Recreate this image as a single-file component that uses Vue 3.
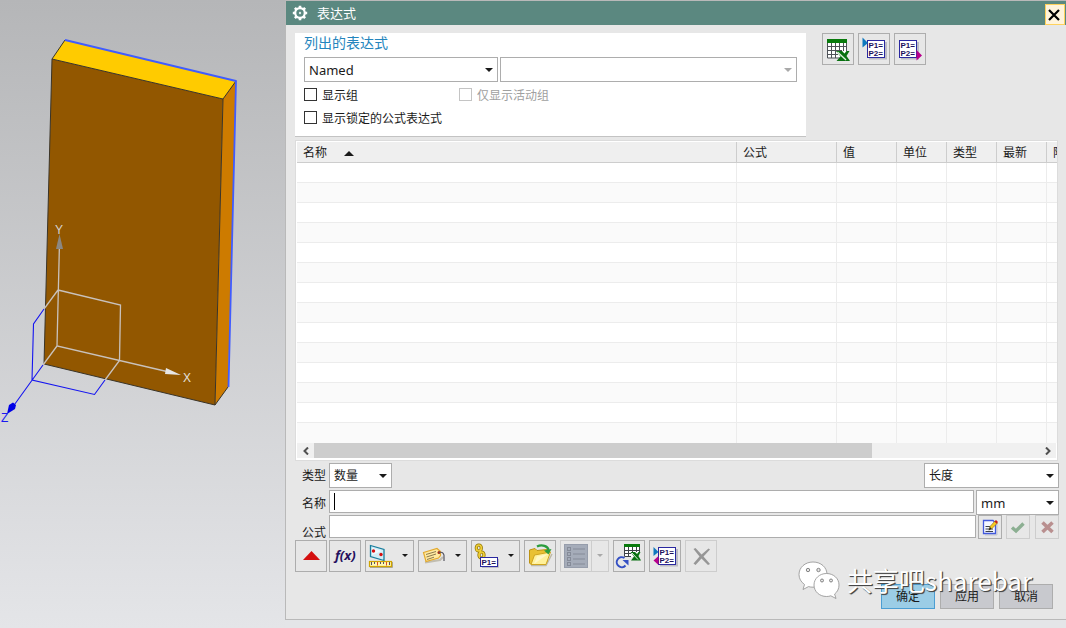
<script setup>
import { ref } from 'vue'

const filter = ref('Named')
const filterText = ref('')
const showGroups = ref(false)
const activeOnly = ref(false)
const showLocked = ref(false)
const kind = ref('数量')
const dimension = ref('长度')
const unit = ref('mm')
const name = ref('')
const formula = ref('')
const columns = [
  { title: '公式', cls: 'c-formula' },
  { title: '值', cls: 'c-value' },
  { title: '单位', cls: 'c-small' },
  { title: '类型', cls: 'c-small' },
  { title: '最新', cls: 'c-small' },
  { title: '附注', cls: 'c-small' },
]
</script>

<template>
  <div class="app">
    <div class="viewport">
      <svg class="scene" viewBox="0 0 285 628" width="285" height="628" role="img" aria-label="XYZ">
        <g stroke-linejoin="round">
          <polygon points="52,59 223,99 215,405 44,364" fill="#925700" />
          <polygon points="52,59 65,40 236,81 223,99" fill="#ffcb00" />
          <polygon points="223,99 236,81 228,387 215,405" fill="#cd7b00" />
          <path d="M65,40 52,59 223,99 236,81M52,59 44,364 215,405 228,387M223,99 215,405" fill="none" stroke="#3a3428" />
          <path d="M65,40 236,81 228.500,387" fill="none" stroke="#405cff" stroke-width="1.800" />
        </g>
        <g fill="none" stroke="#c9c2bc" stroke-width="1.300">
          <path d="M59.500,242 57,346 169,372M58,290 120.500,305 119.500,360.500 105,380M58,290 44,309M57,346 43,365" />
        </g>
        <path d="M44,309 33.500,324 32,380 94.500,394.500 105,380M43,365 12,408" fill="none" stroke="#1414f0" stroke-width="1.100" />
        <polygon points="59.500,234 63,249 56,249" fill="#8b8781" />
        <polygon points="181,375 166,368 165,374" fill="#e6e6e6" />
        <polygon points="7,414 9,405 13,402.500 16,405 15,409" fill="#0000e6" />
        <g class="axis">
          <text x="55" y="234" fill="#d6d2cf">Y</text>
          <text x="183" y="382" fill="#e4e0dc">X</text>
          <text x="1" y="422" fill="#1a1af0">Z</text>
        </g>
      </svg>
    </div>

    <section class="dialog">
      <header class="titlebar">
        <svg width="16" height="16" viewBox="0 0 16 16" aria-hidden="true">
          <g stroke="#fff" fill="none">
            <circle cx="8" cy="8" r="4.800" stroke-width="2.200" />
            <path d="M8,0.800V3M8,13v2.200M0.800,8H3M13,8h2.200M2.900,2.900l1.600,1.600M11.500,11.500l1.600,1.600M2.900,13.100l1.600,-1.600M11.500,4.500l1.600,-1.600" stroke-width="2.600" />
          </g>
          <circle cx="8" cy="8" r="1.200" fill="#dcebe7" />
        </svg>
        <h1>表达式</h1>
        <button class="close" aria-label="关闭">
          <svg width="12" height="12" viewBox="0 0 12 12"><path d="M1,1 11,11M11,1 1,11" stroke="#000" stroke-width="2.200" /></svg>
        </button>
      </header>

      <div class="content">
        <div class="top">
          <div class="panel">
            <h2>列出的表达式</h2>
            <div class="filters">
              <span class="drop named"><select v-model="filter" aria-label="筛选"><option>Named</option></select></span>
              <span class="drop off"><select v-model="filterText" aria-label="筛选文本" disabled><option value=""></option></select></span>
            </div>
            <div class="checks">
              <label><input v-model="showGroups" type="checkbox">显示组</label>
              <label class="disabled"><input v-model="activeOnly" type="checkbox" disabled>仅显示活动组</label>
              <label><input v-model="showLocked" type="checkbox">显示锁定的公式表达式</label>
            </div>
          </div>
          <div class="side">
            <button class="tool" aria-label="电子表格编辑">
              <svg viewBox="1 1 30 30">
                <rect x="5.500" y="6.500" width="19" height="18" fill="#fff" />
                <path d="M5.500,10V25H18M9.500,10V25M13.500,10V25M17.500,10V20M21.500,10V18M24.500,10V18M5.500,13.500H24M5.500,17.500H20M5.500,21.500H16" fill="none" stroke="#4e5258" />
                <rect x="5" y="6" width="20" height="4" fill="#087a0c" />
                <path d="M14,18h6l2.500,2.500 2,-2.500h3l-3,5 3.500,5H14.500l4,-4.500Z" fill="#087010" />
                <path d="M15.500,19l8.500,8" stroke="#dff0df" stroke-width="1.300" />
              </svg>
            </button>
            <button class="tool" aria-label="导入">
              <svg viewBox="1 1 30 30">
                <path d="M11,25.500H28V9" fill="none" stroke="#bcbcc4" stroke-width="2" />
                <rect x="9.500" y="7.500" width="17" height="17" fill="#fff" stroke="#2a28a0" />
                <text x="10.500" y="15">P1=</text><text x="10.500" y="23">P2=</text>
                <path d="M4.500,4.500 10,10 4.500,14.500Z" fill="#1078be" />
              </svg>
            </button>
            <button class="tool" aria-label="导出">
              <svg viewBox="1 1 30 30">
                <path d="M7,25.500H24V9" fill="none" stroke="#bcbcc4" stroke-width="2" />
                <rect x="5.500" y="7.500" width="17" height="17" fill="#fff" stroke="#2a28a0" />
                <text x="6.500" y="15">P1=</text><text x="6.500" y="23">P2=</text>
                <path d="M22.500,17 28,22.500 22.500,27.500Z" fill="#b8008c" />
              </svg>
            </button>
          </div>
        </div>

        <div class="grid">
          <div class="clip">
            <table>
              <thead>
                <tr>
                  <th>名称<i class="sort"></i></th>
                  <th v-for="c in columns" :key="c.title" :class="c.cls">{{ c.title }}</th>
                </tr>
              </thead>
              <tbody>
                <tr v-for="r in 14" :key="r"><td v-for="c in 7" :key="c"></td></tr>
              </tbody>
            </table>
          </div>
          <div class="scroll">
            <button aria-label="向左滚动"><svg width="6" height="8" viewBox="0 0 6 8"><path d="M5,0.500 1.500,4 5,7.500" /></svg></button>
            <div class="track"><div class="thumb"></div></div>
            <button aria-label="向右滚动"><svg width="6" height="8" viewBox="0 0 6 8"><path d="M1,0.500 4.500,4 1,7.500" /></svg></button>
          </div>
        </div>

        <div class="row">
          <label for="kind">类型</label>
          <span class="drop kind"><select id="kind" v-model="kind"><option>数量</option></select></span>
          <span class="drop dimension"><select v-model="dimension" aria-label="量纲"><option>长度</option></select></span>
        </div>
        <div class="row name-row">
          <label for="name">名称</label>
          <span class="field"><input id="name" v-model="name" type="text"><i class="caret"></i></span>
          <span class="drop unit"><select v-model="unit" aria-label="单位"><option>mm</option></select></span>
        </div>
        <div class="row formula-row">
          <label for="formula">公式</label>
          <span class="field"><input id="formula" v-model="formula" type="text"></span>
          <div class="minis">
            <button class="mini" aria-label="编辑">
              <svg viewBox="1 1 22 22">
                <path d="M7,20H19V9" fill="none" stroke="#c3c5cf" />
                <path d="M5.500,5.500H15L17.500,8V18.500H5.500Z" fill="#f4f7ff" stroke="#4259dc" stroke-width="1.300" />
                <path d="M7.500,11.500H13M7.500,14H15M7.500,16.500H15" stroke="#3b414a" />
                <path d="M11,15 12,11.500 17,6 19.500,8 14,13.500Z" fill="#f5c922" stroke="#8a6a10" stroke-width="0.600" />
                <path d="M16.500,6.500 18,5l2,2 -1.500,1.700Z" fill="#c52018" />
                <path d="M10.500,15.500 12,12 13.500,13.800Z" fill="#222" />
              </svg>
            </button>
            <button class="mini off" disabled aria-label="接受">
              <svg viewBox="1 1 22 22"><path d="M6,12.500 10,16 17.500,8.500" fill="none" stroke="#8caf92" stroke-width="3.400" /></svg>
            </button>
            <button class="mini off last" disabled aria-label="拒绝">
              <svg viewBox="1 1 22 22"><path d="M7.500,7.500 17.500,17M17.500,7.500 7.500,17" fill="none" stroke="#b98f8f" stroke-width="3.600" /></svg>
            </button>
          </div>
        </div>

        <div class="toolbar">
          <button class="tool first" aria-label="折叠">
            <svg viewBox="1 1 30 30"><path d="M8,20 16.500,11 25,20Z" fill="#d40f0f" /></svg>
          </button>
          <button class="tool" aria-label="函数">
            <svg viewBox="1 1 30 30"><text class="fx" x="6" y="20">f(x)</text></svg>
          </button>
          <button class="tool split" aria-label="测量">
            <svg viewBox="1 1 30 30">
              <path d="M5.500,5.500 19,9.500V20.500L5.500,16.500Z" fill="#d3edf6" stroke="#187d9d" stroke-width="1.300" />
              <path d="M7,8 17,11 7,15Z" fill="#effaff" />
              <circle cx="8.500" cy="11" r="1.700" fill="#d61010" /><circle cx="16" cy="14.500" r="1.700" fill="#d61010" />
              <path d="M5,27.500H27.500V22" fill="none" stroke="#aaa799" />
              <rect x="4.500" y="21.500" width="22" height="5" fill="#fff7ad" stroke="#d0a500" stroke-width="1.200" />
              <path d="M6.500,22v3M9.500,22v2M15.500,22v2M18.500,22v2M24.500,22v3" stroke="#55506b" /><path d="M12.500,22v3.500M21.500,22v3.500" stroke="#e04a20" />
            </svg><i class="arrow"></i>
          </button>
          <button class="tool split" aria-label="注释">
            <svg viewBox="1 1 30 30">
              <path d="M7,22.500 22,20 25,17" fill="none" stroke="#c1bdb0" stroke-width="2" />
              <path d="M5.500,12.500 19,8.500 22.500,11.500V15.500L20.500,18 8,21.500Z" fill="#ffe9a0" stroke="#e2a92c" stroke-width="1.200" />
              <path d="M8,14.500 18,11.500M8.500,17 18,14M9,19.500 16,17.200" stroke="#8d7b4e" />
              <circle cx="21" cy="12.500" r="1.500" fill="#a62c1d" />
              <path d="M21,12.500C25,11.500 26.500,14 26,17.500V21" fill="none" stroke="#565661" stroke-width="1.200" />
            </svg><i class="arrow"></i>
          </button>
          <button class="tool split" aria-label="引用">
            <svg viewBox="1 1 30 30">
              <g fill="none"><g stroke="#8f7400" stroke-width="3.200"><ellipse cx="7.800" cy="8" rx="2.500" ry="3" /><ellipse cx="10.500" cy="15" rx="2.500" ry="3" /><path d="M8.500,9.500 10,13.500" /></g>
                <g stroke="#f0cf38" stroke-width="1.700"><ellipse cx="7.800" cy="8" rx="2.500" ry="3" /><ellipse cx="10.500" cy="15" rx="2.500" ry="3" /><path d="M8.500,9.500 10,13.500" /></g></g>
              <path d="M11,27.500H27.500V19" fill="none" stroke="#bcbcc4" />
              <rect x="9.500" y="17.500" width="17" height="9" fill="#fff" stroke="#2a28a0" /><text x="10.500" y="25">P1=</text>
            </svg><i class="arrow"></i>
          </button>
          <button class="tool" aria-label="打开">
            <svg viewBox="1 1 30 30">
              <path d="M7,25.500H22L28,14" fill="none" stroke="#bdb9a8" stroke-width="1.500" />
              <path d="M5.500,10 11,8.500 13,10.500 23,9.500V22L7,24.500 5.500,23Z" fill="#e9c133" stroke="#bd9312" />
              <path d="M7,24.500 10.500,15 26.500,12 22,24.500Z" fill="#fff19a" stroke="#d0a51f" />
              <path d="M10,24 13,16.500 24,14Z" fill="#fff8c6" />
              <path d="M13,6.500C18,4 24,6 24.500,10" fill="none" stroke="#2b9c3d" stroke-width="2.400" /><path d="M20,10.500 27.500,9 24.500,14.500Z" fill="#2b9c3d" />
            </svg>
          </button>
          <button class="tool split off" disabled aria-label="列表">
            <svg viewBox="1 1 30 30">
              <rect x="4.500" y="4.500" width="23" height="23" fill="#a5acb9" stroke="#969dab" />
              <path d="M13,9H25M13,14H25M13,19H25M13,24H25" stroke="#858b98" />
              <g fill="#a5acb9" stroke="#858b98"><rect x="7.500" y="7.500" width="3" height="3" /><rect x="7.500" y="12.500" width="3" height="3" /><rect x="7.500" y="17.500" width="3" height="3" /><rect x="7.500" y="22.500" width="3" height="3" /></g>
            </svg><i class="divider"></i><i class="arrow"></i>
          </button>
          <button class="tool" aria-label="从电子表格更新">
            <svg viewBox="1 1 30 30">
              <rect x="11" y="5" width="15" height="12" fill="#fff" />
              <path d="M11.500,7V16.500H18M15.500,7V17M19.500,7V13M23.500,7V12M26.500,7V12M11,10.500H26M11,13.500H18" fill="none" stroke="#3e4248" />
              <rect x="11" y="4" width="16" height="3" fill="#087a0c" />
              <path d="M17.500,12h4.500l2,2 1.500,-2h2l-2,4 2.500,4.500H18l3,-4Z" fill="#087010" /><path d="M19,13l6,6.500" stroke="#dff0df" />
              <path d="M12.500,25.500A5,5 0 1 1 11.500,18" fill="none" stroke="#3450c4" stroke-width="2" /><path d="M9.500,20H15.500V25.500Z" fill="#3450c4" />
            </svg>
          </button>
          <button class="tool" aria-label="导入导出">
            <svg viewBox="1 1 30 30">
              <path d="M11,25.500H28V9" fill="none" stroke="#bcbcc4" stroke-width="2" />
              <rect x="9.500" y="7.500" width="17" height="17" fill="#fff" stroke="#2a28a0" />
              <text x="10.500" y="15">P1=</text><text x="10.500" y="23">P2=</text>
              <path d="M4.500,7 9.500,12 4.500,16Z" fill="#1078be" /><path d="M9.500,16V25L4.500,20.500Z" fill="#b8008c" />
            </svg>
          </button>
          <button class="tool off" disabled aria-label="删除">
            <svg viewBox="1 1 30 30"><path d="M8.500,9 10.500,8 16.500,14.500 23.500,8.500 25,9.500 18.500,16.500 25,24 23,25 16.500,18.500 10.500,25 8.500,23.500 14.500,16.500Z" fill="#969696" /></svg>
          </button>
        </div>

        <footer>
          <button class="primary">确定</button>
          <button>应用</button>
          <button>取消</button>
        </footer>
      </div>

      <div class="watermark">
        <svg width="42" height="38" viewBox="0 0 42 38" aria-hidden="true">
          <g fill="#fff" stroke="#8f8f8f" stroke-width="0.800">
            <path d="M15,1C7,1 1,6.500 1,13.500c0,4 2,7.500 5.500,10L5,28.500 10.500,25.600c1.500,0.400 3,0.600 4.500,0.600 8,0 14,-5.600 14,-12.700S23,1 15,1Z" />
            <path d="M28.500,12.500C21.500,12.500 16,17.500 16,24s5.500,11.500 12.500,11.500c1.500,0 3,-0.200 4.300,-0.700L38,37.500 36.600,33C39.500,31 41,27.500 41,24 41,17.500 35.500,12.500 28.500,12.500Z" />
          </g>
          <g fill="#e7e7e7" stroke="#777" stroke-width="0.900"><circle cx="10" cy="9" r="1.700" /><circle cx="20.500" cy="9" r="1.700" /><circle cx="24" cy="19.500" r="1.500" /><circle cx="33" cy="19.500" r="1.500" /></g>
        </svg>
        <span>共享吧sharebar</span>
      </div>
    </section>
  </div>
</template>

<style>
body { background: #e4e5e8; }
</style>

<style scoped>
.app {
  display: grid;
  grid-template-columns: 285px minmax(0, 1fr);
  min-height: 100vh;
  background: linear-gradient(#b5b6b8, #e4e5e8);
  font: 12px/16px "Noto Sans", "Noto Sans CJK SC", sans-serif;
  color: #1a1a1a;
}
.app *, .app *::before, .app *::after { box-sizing: border-box; }
.viewport { overflow: hidden; }
.scene { display: block; }
.axis text { font: 12px "Liberation Sans", sans-serif; }

.dialog {
  position: relative;
  align-self: start;
  background: #e7e7e7;
  border: 1px solid #b9b9b9;
  border-right: 0;
  box-shadow: 0 8px 0 #e4e5e8;
}
.titlebar {
  display: flex;
  align-items: center;
  gap: 9px;
  height: 24px;
  padding-left: 6px;
  background: #5b8880;
}
h1, h2 { margin: 0; font-weight: 400; }
h1 { flex: 1; font-size: 13px; color: #fff; }
button { font: inherit; color: inherit; padding: 0; border-radius: 0; }
.close {
  display: flex;
  align-items: center;
  justify-content: center;
  align-self: flex-end;
  width: 20px;
  height: 21px;
  margin-right: 1px;
  padding-right: 3px;
  background: #fff4dc;
  border: 1px solid #ffd25c;
}
.content { padding: 8px 7px 10px 9px; }
.top { display: flex; gap: 16px; }
.panel {
  flex: 1;
  height: 104px;
  padding: 0 9px;
  background: #fff;
  border-bottom: 1px solid #c3c3c3;
}
h2 { font-size: 14px; line-height: 20px; color: #2485bd; }
.filters { display: flex; gap: 2px; margin-top: 4px; }
.drop { position: relative; display: block; height: 25px; flex: 1; }
.drop select {
  display: block;
  width: 100%;
  height: 100%;
  padding: 0 18px 0 4px;
  appearance: none;
  background: #fff;
  border: 1px solid #adadad;
  border-radius: 0;
  font: inherit;
  color: inherit;
  opacity: 1;
}
.drop::after {
  content: "";
  position: absolute;
  right: 5px;
  top: 11px;
  border: 4px solid transparent;
  border-top-color: #1a1a1a;
  border-bottom: 0;
}
.drop.off::after { border-top-color: #a9a9a9; }
.drop.named { flex: 0 0 194px; }
.drop.named select, .drop.unit select { font-size: 13px; }
.checks { display: grid; grid-template-columns: 155px 1fr; row-gap: 7px; margin-top: 5px; }
.checks label { display: flex; align-items: flex-start; gap: 5px; height: 16px; line-height: 18px; white-space: nowrap; }
.checks label:last-child { grid-column: 1 / -1; }
.checks input { appearance: none; width: 13px; height: 13px; margin: 1px 0 0; background: #fff; border: 1px solid #333; }
.checks .disabled { color: #a0a0a0; }
.checks .disabled input { border-color: #c4c4c4; }
.side { display: flex; gap: 4px; width: 237px; }

.tool {
  position: relative;
  display: flex;
  width: 32px;
  height: 32px;
  background: #e7e7e7;
  border: 1px solid #adadad;
}
.tool svg { display: block; flex: none; width: 30px; height: 30px; }
.tool text { font: bold 8px "Liberation Sans", sans-serif; fill: #21105c; }
.tool .fx { font: italic bold 13px "Noto Sans", sans-serif; fill: #25105e; }
.split { width: 49px; }
.arrow {
  position: absolute;
  right: 5px;
  top: 13px;
  border: 3px solid transparent;
  border-top-color: #1a1a1a;
  border-bottom: 0;
}
.tool.off { border-color: #cdcdcd; }
.tool.off .arrow { border-top-color: #a9a9a9; }
.divider { width: 1px; height: 30px; background: #cdcdcd; }

.grid { margin-top: 3px; border: 1px solid #dcdcdc; margin-right: 1px; background: #fff; padding: 1px 0 2px 1px; }
.clip { overflow: hidden; }
table { width: calc(100% + 40px); table-layout: fixed; border-collapse: separate; border-spacing: 0; }
th {
  height: 21px;
  padding: 2px 6px 0;
  background: #efefef;
  border-right: 1px solid #cdcdcd;
  border-bottom: 1px solid #cdcdcd;
  text-align: left;
  font-weight: 400;
  line-height: 18px;
  white-space: nowrap;
}
.c-formula { width: 100px; }
.c-value { width: 60px; }
.c-small { width: 50px; }
.sort { display: inline-block; margin-left: 17px; vertical-align: 1px; border: 5px solid transparent; border-bottom-color: #1a1a1a; border-top: 0; }
td { height: 20px; padding: 0; border-right: 1px solid #ececec; border-bottom: 1px solid #ececec; }
tbody tr:nth-child(even) td { background: #fafafa; }
tbody tr:last-child td { border-bottom: 0; }
.scroll { display: flex; height: 15px; margin-right: 1px; background: #f0f0f0; }
.scroll button { display: flex; align-items: center; justify-content: center; width: 17px; border: 0; background: none; }
.scroll path { fill: none; stroke: #505050; stroke-width: 2; }
.track { flex: 1; }
.thumb { width: 77%; height: 100%; background: #cdcdcd; }

.row { display: flex; height: 25px; margin-top: 2px; }
.row > label { width: 34px; padding-left: 7px; line-height: 25px; }
.row .kind { flex: 0 0 63px; }
.row .dimension { flex: 0 0 135px; margin-left: auto; }
.name-row { gap: 2px; }
.name-row > label { width: 32px; line-height: 27px; }
.row .unit { flex: 0 0 83px; }
.formula-row { height: 24px; margin-top: 0; }
.formula-row > label { line-height: 12px; align-self: flex-end; }
.field { position: relative; flex: 1; height: 23px; }
.field input { display: block; width: 100%; height: 100%; padding: 0 4px; border: 1px solid #adadad; border-radius: 0; background: #fff; font: inherit; outline: 0; }
.caret { position: absolute; left: 5px; top: 3px; width: 1px; height: 17px; background: #000; }
.minis { display: flex; gap: 4px; margin-left: 2px; }
.mini { width: 24px; height: 24px; background: #e7e7e7; border: 1px solid #adadad; }
.mini svg { display: block; width: 22px; height: 22px; }
.mini.off { border-color: #cdcdcd; }
.mini.last { margin-left: 1px; }
.toolbar { display: flex; gap: 4px; margin-top: 1px; }
.toolbar .first { margin-right: -2px; }

footer { display: flex; justify-content: flex-end; gap: 5px; margin-top: 12px; padding-right: 6px; }
footer button { width: 54px; height: 25px; background: #c8c9ce; border: 1px solid #adadad; }
footer .primary { background: #9bcde6; border-color: #4b9ed3; }
.watermark {
  position: absolute;
  right: 34px;
  bottom: 20px;
  display: flex;
  align-items: center;
  gap: 7px;
  pointer-events: none;
}
.watermark span {
  font: 26px/38px "Noto Sans CJK SC", sans-serif;
  color: #fff;
  text-shadow: 1px 1px 1px #444, 1px 1px 0 #666;
  white-space: nowrap;
}
</style>
